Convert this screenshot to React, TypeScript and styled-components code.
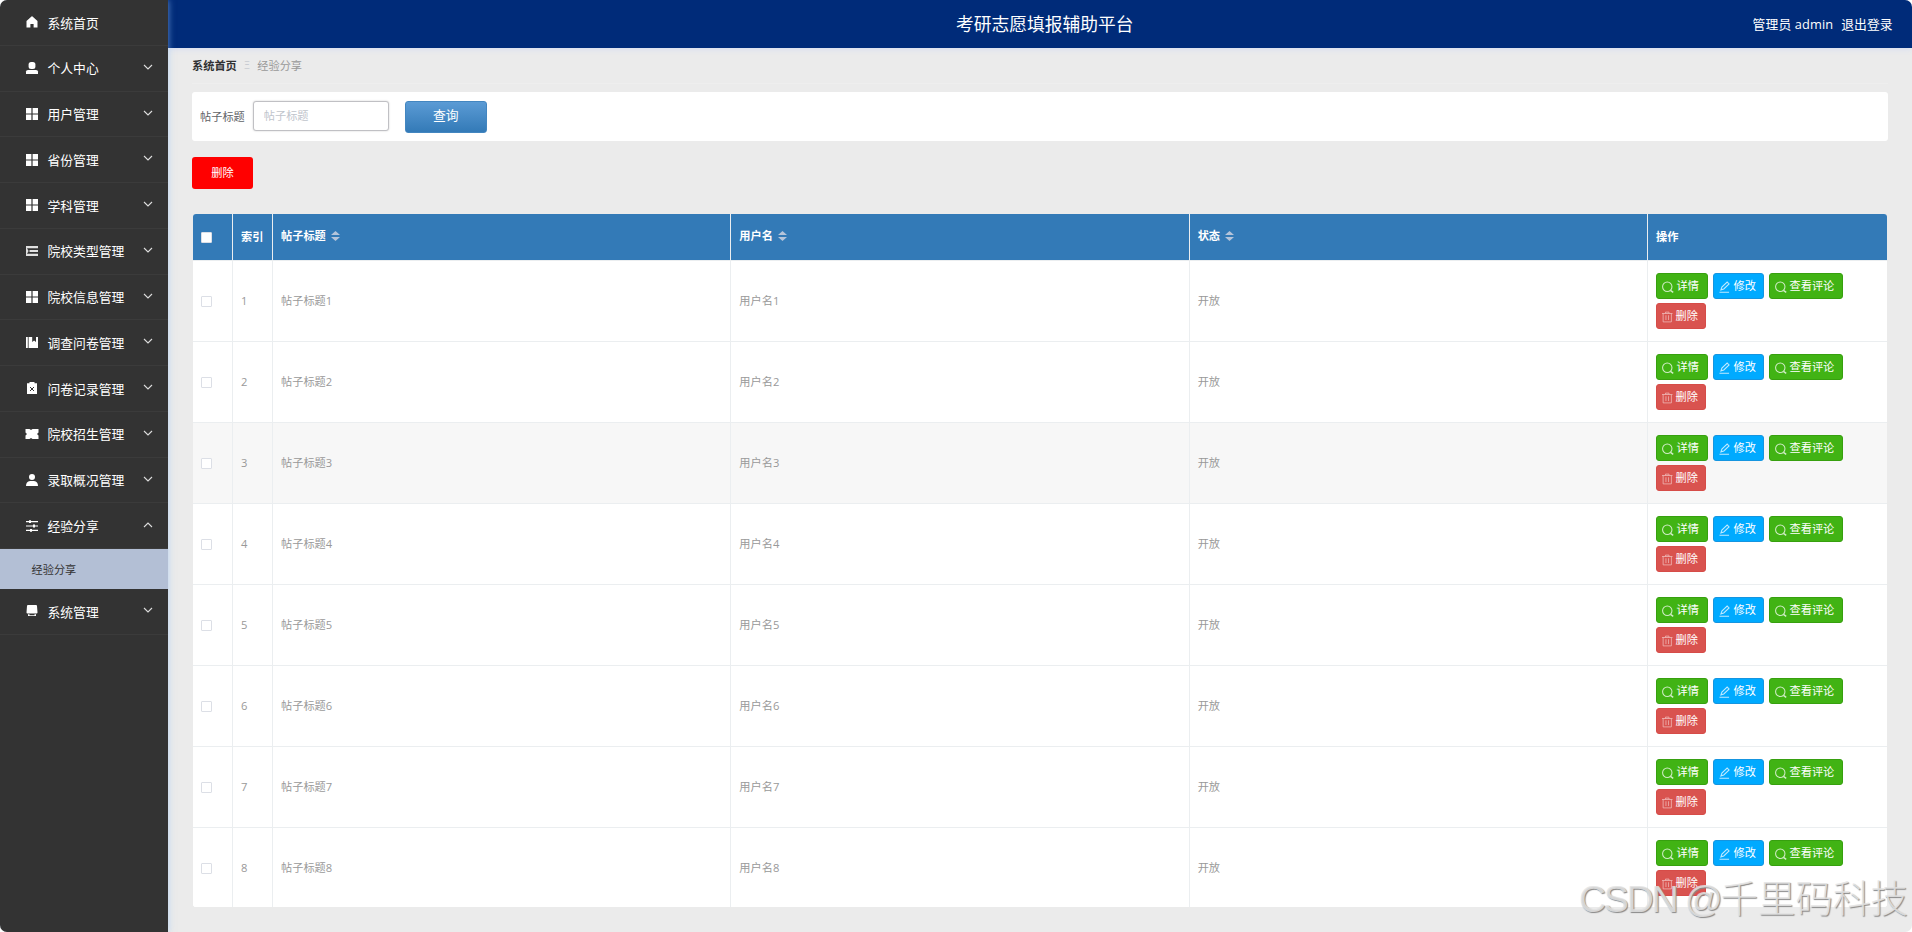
import React from "react";
import styled, { createGlobalStyle } from "styled-components";

const Global = createGlobalStyle`
  * { box-sizing: border-box; }
  body { margin: 0; background: #fff; font-family: "Open Sans", "Noto Sans", "Noto Sans CJK SC", sans-serif; font-size: 11.2px; }
  button, input { font-family: inherit; }
`;

const Page = styled.div`
  display: flex;
  position: relative;
  width: 1912px;
  height: 932px;
  overflow: hidden;
  border-radius: 7px;
  background: #ebebeb;
`;

const Sidebar = styled.nav`
  width: 168px;
  flex: none;
  background: #333;
  box-shadow: 1px 0 6px rgba(150, 195, 250, 0.5);
  z-index: 1;
`;

const MenuItem = styled.div`
  display: flex;
  align-items: center;
  height: 45.75px;
  padding: 0 15.5px 0.5px 26px;
  border-bottom: 1px solid #3b3b3b;
  color: #fff;
  font-size: 12.8px;
`;

const MenuIcon = styled.svg`
  width: 12px;
  height: 12px;
  margin: 0.5px 9.5px 0 0;
  flex: none;
  fill: #fff;
  overflow: visible;
`;

const MenuLabel = styled.span`
  flex: 1;
  white-space: nowrap;
`;

const Arrow = styled.svg<{ $up?: boolean }>`
  width: 10px;
  height: 6px;
  margin-top: ${(p) => (p.$up ? 0 : -2)}px;
  fill: none;
  stroke: #ddd;
  stroke-width: 1.1;
  transform: ${(p) => (p.$up ? "rotate(180deg)" : "none")};
`;

const SubItem = styled.div`
  display: flex;
  align-items: center;
  height: 40px;
  padding: 0 0 1px 31.5px;
  background: #b3bfd5;
  color: #333;
`;

const Main = styled.main`
  flex: 1;
  min-width: 0;
`;

const Header = styled.header`
  display: grid;
  grid-template-columns: 1fr auto 1fr;
  align-items: center;
  height: 48px;
  padding: 0 19.5px 2px 0;
  background: #002b79;
  color: #fff;
  box-shadow: 0 1px 6px #d5ddf3;
`;

const Title = styled.h1`
  grid-column: 2;
  margin: 0;
  padding-left: 29px;
  font-size: 17.75px;
  font-weight: 400;
`;

const UserInfo = styled.div`
  display: flex;
  justify-content: flex-end;
  gap: 8px;
  font-size: 12.8px;
`;

const UserName = styled.span`
  letter-spacing: 0.13px;
`;

const Content = styled.div`
  padding: 0 24px;
`;

const Breadcrumb = styled.div`
  display: flex;
  align-items: center;
  height: 36px;
  margin-bottom: 8px;
  padding-bottom: 1px;
  border-bottom: 1px solid #eee;
  color: #999;
`;

const Crumb = styled.b`
  color: #303133;
`;

const CrumbSep = styled.span`
  width: 20.5px;
  text-align: center;
  font-size: 10px;
  color: #c8cbd2;
`;

const SearchBar = styled.div`
  display: flex;
  align-items: center;
  height: 49px;
  padding: 0 8px;
  border-radius: 3px;
  background: #fff;
  color: #606266;
`;

const SearchLabel = styled.span`
  padding-bottom: 2px;
`;

const SearchInput = styled.input`
  width: 136px;
  height: 30px;
  margin: 0 16px 1px 8px;
  padding: 0 10px 1px;
  border: 1px solid #c0c0c4;
  border-radius: 3px;
  outline: none;
  box-shadow: 0 0 2px #ccc;
  font-size: 11.2px;
  &::placeholder { color: #c0c4cc; }
`;

const SearchButton = styled.button`
  width: 82px;
  height: 32px;
  padding: 0 0 5px;
  border: 1px solid #4386c0;
  border-radius: 3px;
  background: linear-gradient(#5b9bd5, #337ab7);
  color: #fff;
  font-size: 12.8px;
`;

const DeleteButton = styled.button`
  display: block;
  width: 61px;
  height: 32px;
  margin: 16px 0 25px;
  padding: 0 0 3px;
  border: 0;
  border-radius: 3px;
  background: #f00;
  color: #fff;
  font-size: 11.2px;
`;

const Table = styled.div`
  width: 1694px;
  margin-left: 1px;
  border-radius: 3px;
  overflow: hidden;
  background: #fff;
`;

const Row = styled.div<{ $head?: boolean; $active?: boolean }>`
  display: grid;
  grid-template-columns: 40px 40px repeat(3, 1fr) 239px;
  height: ${(p) => (p.$head ? 47 : 81)}px;
  background: ${(p) => (p.$head ? "#337ab7" : p.$active ? "#f7f7f7" : "#fff")};
  color: ${(p) => (p.$head ? "#fff" : "#999")};
  font-weight: ${(p) => (p.$head ? 700 : 400)};
  &:last-child { height: 79px; }
`;

const Cell = styled.div<{ $sortable?: boolean }>`
  display: flex;
  align-items: center;
  padding: 0 8px ${(p) => (p.$sortable ? 4 : 2)}px;
  border-right: 1px solid #ebeef0;
  border-bottom: 1px solid #ebeef0;
  &:last-child { border-right: 0; }
  ${Row}:last-child > & { border-bottom: 0; padding-bottom: 1px; }
`;

const Checkbox = styled.span`
  width: 11px;
  height: 11px;
  margin-top: 2px;
  border: 1px solid #dcdfe6;
  border-radius: 1px;
  background: #fff;
`;

const Sort = styled.svg`
  width: 9px;
  height: 10px;
  margin: 1px 0 0 5px;
  fill: #b4c4da;
`;

const Actions = styled(Cell)`
  flex-wrap: wrap;
  align-content: flex-start;
  gap: 4px 5px;
  padding-top: 12px;
  padding-right: 30px;
`;

const tones = {
  green: ["#41b314", "#37a00f"],
  blue: ["#00aaff", "#1595e0"],
  red: ["#d9534f", "#d64c48"],
};

const ActionButton = styled.button<{ $tone: keyof typeof tones; $width: number }>`
  display: flex;
  align-items: center;
  gap: 3px;
  width: ${(p) => p.$width}px;
  height: 26px;
  padding: 0 0 2px 5px;
  border: 1px solid ${(p) => tones[p.$tone][1]};
  border-radius: 3px;
  background: ${(p) => tones[p.$tone][0]};
  color: #fff;
  font-size: 11.2px;
  white-space: nowrap;
`;

const ActionIcon = styled.svg<{ $narrow?: boolean }>`
  width: ${(p) => (p.$narrow ? 10.5 : 11.5)}px;
  height: 12px;
  margin-top: 3px;
  flex: none;
  fill: none;
  stroke: #fff;
  stroke-width: ${(p) => (p.$narrow ? 0.9 : 1.1)};
  opacity: ${(p) => (p.$narrow ? 0.6 : 0.75)};
`;

const Watermark = styled.div`
  position: absolute;
  right: 4px;
  bottom: 9px;
  color: rgba(228, 228, 228, 0.85);
  font-family: "Liberation Sans", "Noto Sans CJK SC", sans-serif;
  font-size: 37.5px;
  line-height: 48px;
  font-weight: 300;
  white-space: nowrap;
  text-shadow: 1px 1px 1px #888;
`;

const WatermarkBrand = styled.span`
  letter-spacing: -2.2px;
`;

const icons: Record<string, React.ReactNode> = {
  home: <path d="M6 .3Q6.500.3 11.500 5v6.600H7.600V8H4.400v3.600H.5V5Q5.500.3 6 .3z" />,
  user: <><rect x="2.6" y="0" width="6.8" height="7" rx="2.5" /><path d="M0 12V9.5Q0 8 2 8h8q2 0 2 1.5V12z" /></>,
  grid: <path d="M0 0h5.4v5.4H0zM6.6 0H12v5.4H6.6zM0 6.6h5.4V12H0zM6.6 6.6H12V12H6.6z" />,
  list: <path d="M0 1h12v2.200H0zM3.500 4.900H12v2.200H3.500zM0 8.800h12V11H0zM0 3.200h1L2.600 6 1 8.800H0z" opacity=".85" />,
  book: <path d="M0 0h1.800v11H0zM2.600 0h3.600v5l1.900-1.500L10 5V0h2v11H2.600z" />,
  clip: <><path d="M1 1.200h2.500V0h5v1.200H11V12H1z" /><path d="m4 5 4 4M8 5 4 9" stroke="#333" strokeWidth="1" /></>,
  ticket: <path d="M-.5 1h4L5 2l1.500-1h6v3.500L11 6l1.500 1.500V11h-6L5 10l-1.500 1h-4V7.500L1 6-.5 4.500z" />,
  person: <><circle cx="6" cy="3" r="3" /><path d="M0 12q0-4.500 4-5h4q4 .5 4 5z" /></>,
  sliders: <path d="M0 1h12v1.200H0zM0 5.400h12v1.200H0zM0 9.800h12V11H0zM3 .2h2v2.800H3zM7 4.600h2v2.800H7zM4 9h2v2.800H4z" />,
  monitor: <path d="M2 0h8q1 0 1 1l.5 6.500q0 1-1 1h-9q-1 0-1-1L1 1q0-1 1-1zM2 9.200h1.500v1h5v-1H10V11H2z" />,
  search: <><circle cx="5.5" cy="5.700" r="4.900" /><path d="M8.800 9.500 11.700 11.600" strokeWidth="1.600" /></>,
  edit: <path d="M2 9 3 6 8.5.8l2 2L5 8zM.5 11.5h10" />,
  trash: <path d="M0 2h12M4 2V.4h4V2M1.300 2v9.600h9.400V2M4.500 4v5.500M7.500 4v5.500" />,
};

const menu: [string, string][] = [
  ["home", "系统首页"],
  ["user", "个人中心"],
  ["grid", "用户管理"],
  ["grid", "省份管理"],
  ["grid", "学科管理"],
  ["list", "院校类型管理"],
  ["grid", "院校信息管理"],
  ["book", "调查问卷管理"],
  ["clip", "问卷记录管理"],
  ["ticket", "院校招生管理"],
  ["person", "录取概况管理"],
  ["sliders", "经验分享"],
  ["monitor", "系统管理"],
];

const SortIcon = () => (
  <Sort viewBox="0 0 8 10" preserveAspectRatio="none"><path d="M0 4 4 0l4 4zM0 6h8l-4 4z" /></Sort>
);

const actions: [string, string, keyof typeof tones, number][] = [
  ["search", "详情", "green", 52],
  ["edit", "修改", "blue", 51],
  ["search", "查看评论", "green", 74],
  ["trash", "删除", "red", 50],
];

export default function App() {
  return (
    <>
      <Global />
      <Page>
        <Sidebar>
          {menu.map(([icon, label], i) => (
            <React.Fragment key={label}>
              <MenuItem>
                <MenuIcon viewBox="0 0 12 12">{icons[icon]}</MenuIcon>
                <MenuLabel>{label}</MenuLabel>
                {i > 0 && <Arrow viewBox="0 0 10 6" $up={icon === "sliders"}><path d="m1 1 4 4 4-4" /></Arrow>}
              </MenuItem>
              {icon === "sliders" && <SubItem>经验分享</SubItem>}
            </React.Fragment>
          ))}
        </Sidebar>
        <Main>
          <Header>
            <Title>考研志愿填报辅助平台</Title>
            <UserInfo><UserName>管理员 admin</UserName><span>退出登录</span></UserInfo>
          </Header>
          <Content>
            <Breadcrumb>
              <Crumb>系统首页</Crumb>
              <CrumbSep>Ξ</CrumbSep>
              <span>经验分享</span>
            </Breadcrumb>
            <SearchBar>
              <SearchLabel>帖子标题</SearchLabel>
              <SearchInput placeholder="帖子标题" />
              <SearchButton>查询</SearchButton>
            </SearchBar>
            <DeleteButton>删除</DeleteButton>
            <Table>
              <Row $head>
                <Cell><Checkbox /></Cell>
                <Cell>索引</Cell>
                <Cell $sortable>帖子标题<SortIcon /></Cell>
                <Cell $sortable>用户名<SortIcon /></Cell>
                <Cell $sortable>状态<SortIcon /></Cell>
                <Cell>操作</Cell>
              </Row>
              {[1, 2, 3, 4, 5, 6, 7, 8].map((n) => (
                <Row key={n} $active={n === 3}>
                  <Cell><Checkbox /></Cell>
                  <Cell>{n}</Cell>
                  <Cell>帖子标题{n}</Cell>
                  <Cell>用户名{n}</Cell>
                  <Cell>开放</Cell>
                  <Actions>
                    {actions.map(([icon, label, tone, width]) => (
                      <ActionButton key={label} $tone={tone} $width={width}>
                        <ActionIcon viewBox="0 0 12 12" $narrow={icon === "trash"}>{icons[icon]}</ActionIcon>
                        {label}
                      </ActionButton>
                    ))}
                  </Actions>
                </Row>
              ))}
            </Table>
          </Content>
        </Main>
        <Watermark><WatermarkBrand>CSDN @</WatermarkBrand>千里码科技</Watermark>
      </Page>
    </>
  );
}
